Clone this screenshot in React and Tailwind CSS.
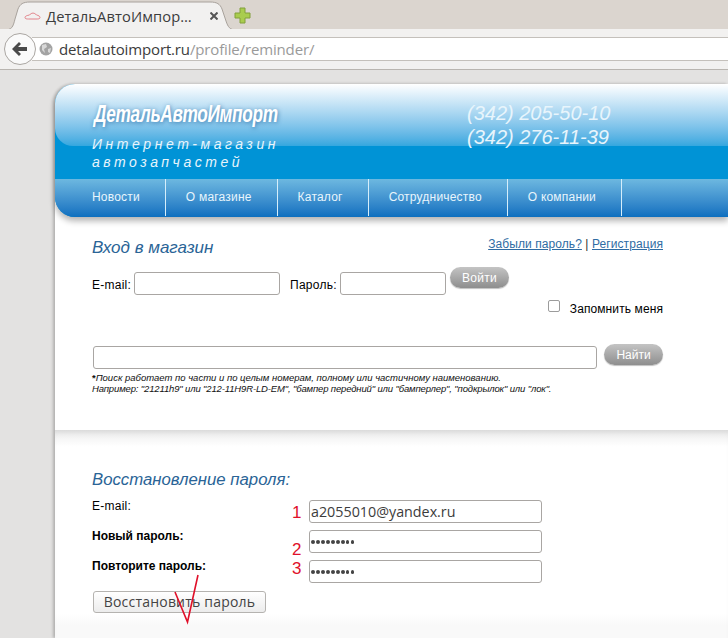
const NAV = ["Новости", "О магазине", "Каталог", "Сотрудничество", "О компании"];

const Tab = () => (
  <div className="relative w-[232px] h-[30px] ml-[4px] mt-[1px] flex items-center pl-[42px] text-[#3c3c3c]">
    <svg className="absolute inset-0" width="232" height="30" viewBox="0 0 232 30">
      <path d="M0 29 C8 29 9 26 11 18 L14 8 C16 3 19 1 26 1 L206 1 C213 1 216 3 218 8 L222 20 C224 26 226 29 232 29" fill="#f2f1f0" stroke="#a8a29c" />
      <path d="M0 29 L232 29 L232 30 L0 30 Z" fill="#f2f1f0" />
    </svg>
    <svg className="absolute left-[20px] top-[10px]" width="17" height="10" viewBox="0 0 17 10" fill="none" stroke="#e0777f" strokeWidth="0.9">
      <path d="M1 6.5 C1 5 3 4.5 5.5 4 C7.5 1.5 10.5 1.5 12.5 4 C14.5 4.5 16 5.2 16 6.5 C16 8 14 8 13 8 L4.5 8 C3 8 1 8 1 6.5 Z" />
    </svg>
    <span className="relative text-[14.7px] leading-none font-['Open_Sans','Noto_Sans',sans-serif] tracking-[0.1px] whitespace-nowrap">ДетальАвтоИмпор…</span>
    <svg className="absolute left-[206px] top-[11px]" width="8" height="8" viewBox="0 0 8 8" stroke="#555" strokeWidth="2">
      <path d="M0.5 0.5 L7.5 7.5 M7.5 0.5 L0.5 7.5" />
    </svg>
  </div>
);

const Toolbar = () => (
  <div className="relative h-[41px] bg-[#f2f1f0] border-b border-[#b9b5b0] flex items-center">
    <div className="ml-[4px] w-[32px] h-[32px] rounded-full border border-[#aaa6a2] bg-[#fafafa] flex items-center justify-center shrink-0 z-10">
      <svg width="16" height="14" viewBox="0 0 16 14" fill="#4a4a4a">
        <path d="M0 7 L7 0 L9 2 L6 5 L15 5 L15 9 L6 9 L9 12 L7 14 Z" />
      </svg>
    </div>
    <div className="-ml-[4px] flex-1 h-[24px] bg-white border-y border-[#c4c0bb] flex items-center pl-[7px]">
      <svg width="14" height="14" viewBox="0 0 14 14" className="shrink-0">
        <circle cx="7" cy="7" r="6.5" fill="#a3a3a3" />
        <path d="M3 3 L7 2 L8 5 L5 7 L6 11 L3 8 Z M9 7 L12 6 L11 11 L9 10 Z" fill="#d8d8d8" />
      </svg>
      <span className="ml-[6px] text-[15px] leading-none font-['Open_Sans','Noto_Sans',sans-serif] tracking-[-0.15px] text-[#3c3c3c] whitespace-nowrap">
        detalautoimport.ru<span className="text-[#9a9a9a]">/profile/reminder/</span>
      </span>
    </div>
  </div>
);

const PillButton = ({ children, className }) => (
  <button className={`h-[21px] w-[59px] rounded-full bg-gradient-to-b from-[#c4c4c4] to-[#8e8e8e] text-white text-[12px] leading-none shadow-[0_1px_1px_rgba(0,0,0,0.25)] ${className}`}>
    {children}
  </button>
);

const Field = ({ className }) => (
  <div className={`h-[23px] bg-white border border-[#a9a6a3] rounded-[3px] ${className}`} />
);

const RecoverRow = ({ label, bold, num, numClass, children }) => (
  <>
    <div className={`text-[12px] leading-[13px] text-black ${bold ? "font-bold" : "tracking-[0.25px]"}`}>{label}</div>
    <div className="relative h-[23px] bg-white border border-[#a9a6a3] rounded-[3px] pl-[1px] pt-[1px] flex items-center text-[#3c3c3c] font-['Open_Sans','Noto_Sans',sans-serif] text-[14.3px] leading-none">
      <span className={`absolute left-[-18px] text-[#e0102a] text-[17px] leading-none font-['Liberation_Sans',sans-serif] ${numClass}`}>{num}</span>
      {children}
    </div>
  </>
);

const Dots = () => (
  <div className="flex gap-[1.4px]">
    {Array.from({ length: 9 }).map((_, i) => (
      <span key={i} className="w-[3.6px] h-[3.6px] rounded-full bg-[#444]" />
    ))}
  </div>
);

export default function App() {
  return (
    <div className="w-[728px] h-[638px] overflow-hidden relative bg-[#e3e2e1] font-['Liberation_Sans',Arial,sans-serif]">
      {/* browser chrome */}
      <div className="h-[29px] bg-[#dbd5cf] flex">
        <Tab />
        <svg className="ml-[-2px] mt-[7px]" width="17" height="17" viewBox="0 0 17 17">
          <path d="M6 1 L11 1 L11 6 L16 6 L16 11 L11 11 L11 16 L6 16 L6 11 L1 11 L1 6 L6 6 Z" fill="#a9cc4e" stroke="#82a03a" strokeLinejoin="round" />
        </svg>
      </div>
      <Toolbar />

      {/* page */}
      <div className="pt-[14px] pl-[55px]">
        <div className="bg-white shadow-[-2px_0_3px_rgba(0,0,0,0.22)] rounded-tl-[20px]">
          {/* header */}
          <header className="h-[133px] bg-[#0093d6] rounded-l-[20px] overflow-hidden shadow-[0_4px_6px_rgba(0,0,0,0.3)] relative">
            <div className="h-[62px] rounded-bl-[18px] bg-gradient-to-b from-[#ffffff] to-[#33a7df] flex text-[#e8f5fc]">
              <div className="pl-[38px] pt-[17px] w-[412px] shrink-0">
                <div className="ml-[1px] text-white text-[23px] leading-[26px] font-bold italic tracking-[-0.4px] [text-shadow:1px_1px_5px_rgba(20,90,150,0.7)] scale-x-[0.75] origin-left whitespace-nowrap">ДетальАвтоИмпорт</div>
                <div className="-ml-[1px] mt-[8px] text-[14px] leading-[18px] italic tracking-[3.55px] whitespace-nowrap">
                  Интернет-магазин
                  <br />
                  автозапчастей
                </div>
              </div>
              <div className="pt-[17px] text-[20px] leading-[24px] italic whitespace-nowrap">
                (342) 205-50-10
                <br />
                (342) 276-11-39
              </div>
            </div>
            <div className="h-[33px]" />
            <nav className="h-[38px] flex bg-gradient-to-b from-[#6db8e0] to-[#0b6fbf]">
              {NAV.map((item, i) => (
                <div key={item} className={`h-[37px] pb-[1px] flex items-center border-r border-[#d5eefb] pr-[25px] text-[#e8f5fc] text-[12px] tracking-[0.2px] ${i === 0 ? "pl-[37px]" : "pl-[20px]"}`}>
                  {item}
                </div>
              ))}
            </nav>
          </header>

          {/* login */}
          <section className="h-[213px] pl-[37px] pr-[65px] relative">
            <div className="flex justify-between pt-[20px]">
              <h2 className="mt-[1px] text-[17px] leading-[20px] italic text-[#2a6496]">Вход в магазин</h2>
              <div className="text-[12px] leading-[14px] text-[#2f6ca3] tracking-[0.08px]">
                <a className="underline">Забыли пароль?</a> <span className="text-[#333]">|</span> <a className="underline">Регистрация</a>
              </div>
            </div>
            <div className="flex mt-[9px] text-[12px] tracking-[0.25px] text-black h-[28px]">
              <span className="w-[42px] pt-[11px] leading-[14px]">E-mail:</span>
              <Field className="w-[146px] mt-[5px]" />
              <span className="ml-[10px] w-[50px] pt-[11px] leading-[14px]">Пароль:</span>
              <Field className="w-[106px] mt-[5px]" />
              <PillButton className="ml-[4px]">Войти</PillButton>
            </div>
            <div className="flex justify-end items-start text-[12px] tracking-[0.1px] text-black mt-[5px]">
              <span className="w-[12px] h-[12px] rounded-[2px] border border-[#9c9c9c] bg-white" />
              <span className="ml-[10px] mt-[2px] leading-[14px]">Запомнить меня</span>
            </div>
            <div className="flex mt-[28px] items-start">
              <Field className="w-[504px] ml-[1px] mt-[2px]" />
              <PillButton className="ml-[7px]">Найти</PillButton>
            </div>
            <p className="mt-[3px] text-[9.5px] leading-[11px] italic text-[#111] whitespace-nowrap">
              <b className="not-italic">*</b>Поиск работает по части и по целым номерам, полному или частичному наименованию.
              <br />
              <span className="tracking-[-0.14px]">Например: "21211h9" или "212-11H9R-LD-EM", "бампер передний" или "бамперлер", "подкрылок" или "лок".</span>
            </p>
          </section>

          {/* recover */}
          <section className="h-[208px] pl-[37px] bg-[linear-gradient(#ececec,#ffffff_8%,#ffffff_88%,#f9f9f9_94%)] shadow-[inset_0_6px_6px_-4px_rgba(0,0,0,0.1)]">
            <h2 className="pt-[40px] text-[16.75px] leading-[20px] italic text-[#2a6496]">Восстановление пароля:</h2>
            <div className="grid grid-cols-[217px_233px] gap-y-[7px] mt-[10px]">
              <RecoverRow label="E-mail:" num="1" numClass="top-[3px]">a2055010@yandex.ru</RecoverRow>
              <RecoverRow label="Новый пароль:" bold num="2" numClass="top-[10px]"><Dots /></RecoverRow>
              <RecoverRow label="Повторите пароль:" bold num="3" numClass="top-[-1px]"><Dots /></RecoverRow>
            </div>
            <button className="mt-[8px] ml-[1px] w-[173px] h-[22px] rounded-[3px] border border-[#b5b3b0] bg-gradient-to-b from-white to-[#ececec] text-[#444] text-[14px] leading-none font-['Open_Sans','Noto_Sans',sans-serif] tracking-[0.2px]">
              Восстановить пароль
            </button>
          </section>
        </div>
      </div>

      {/* red annotation drawn over the button */}
      <svg className="absolute left-[170px] top-[570px]" width="34" height="56" viewBox="0 0 34 56" fill="none" stroke="#e0102a" strokeWidth="1.6">
        <path d="M28 5 L17.5 52 L5 22" />
      </svg>
    </div>
  );
}
